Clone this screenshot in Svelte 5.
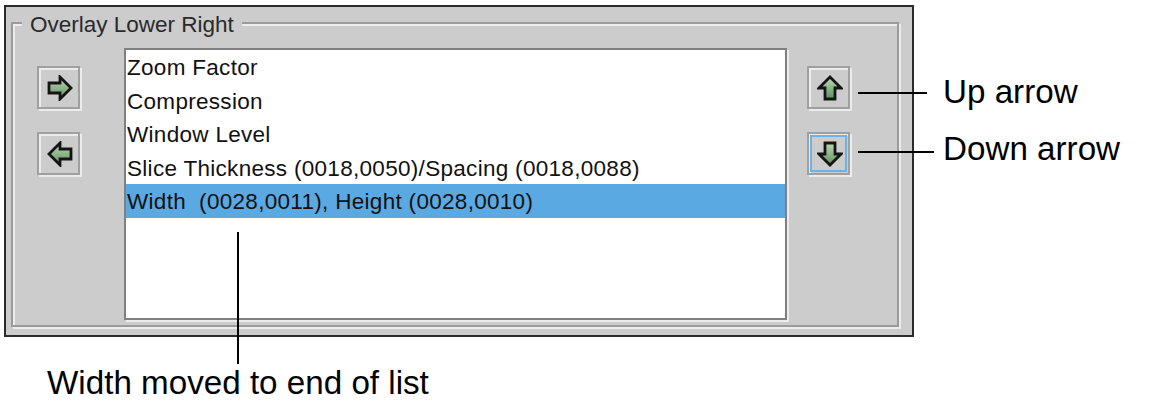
<script>
  const items = [
    'Zoom Factor',
    'Compression',
    'Window Level',
    'Slice Thickness (0018,0050)/Spacing (0018,0088)',
    'Width  (0028,0011), Height (0028,0010)'
  ];
  const selected = 4;

  const arrows = {
    right: '2,8 13,8 13,2 24,13 13,24 13,18 2,18',
    left: '24,8 13,8 13,2 2,13 13,24 13,18 24,18',
    up: '8,24 8,13 2,13 13,2 24,13 18,13 18,24',
    down: '8,2 8,13 2,13 13,24 24,13 18,13 18,2'
  };
</script>

{#snippet arrowButton(dir, focused)}
  <button class="arrow-btn" class:focused type="button">
    <svg width="26" height="26" viewBox="0 0 26 26">
      <polygon points={arrows[dir]} fill="url(#arrowFill)" stroke="#141414" stroke-width="2.8" />
    </svg>
  </button>
{/snippet}

<svg class="defs" width="0" height="0">
  <defs>
    <linearGradient id="arrowFill" x1="0" y1="0" x2="0" y2="1">
      <stop offset="0" stop-color="#bcd8b4" />
      <stop offset="1" stop-color="#5f9060" />
    </linearGradient>
  </defs>
</svg>

<div class="figure">
  <div class="panel">
    <div class="frame">
      <span class="legend">Overlay Lower Right</span>
      <div class="buttons left">
        {@render arrowButton('right', false)}
        {@render arrowButton('left', false)}
      </div>
      <ul class="list">
        {#each items as item, i}
          <li class:selected={i === selected}>{item}</li>
        {/each}
      </ul>
      <div class="buttons right">
        {@render arrowButton('up', false)}
        {@render arrowButton('down', true)}
      </div>
    </div>
  </div>

  <!-- callouts drawn over the screenshot -->
  <div class="callout up"><i></i><span>Up arrow</span></div>
  <div class="callout down"><i></i><span>Down arrow</span></div>
  <div class="leader"></div>
  <div class="caption">Width moved to end of list</div>
</div>

<style>
  :global(body) {
    background: #fff;
  }

  .defs {
    position: absolute;
  }

  .figure {
    position: relative;
    height: 417px;
    padding: 5px 0 0 4px;
    box-sizing: border-box;
    overflow: hidden;
    font-family: "Liberation Sans", Arial, sans-serif;
    color: #000;
  }

  .panel {
    width: 910px;
    height: 332px;
    box-sizing: border-box;
    padding: 15px 0 0 5px;
    background: #cccccc;
    border: 2px solid #2b2b2b;
  }

  .frame {
    position: relative;
    display: flex;
    align-items: flex-start;
    width: 888px;
    height: 305px;
    box-sizing: border-box;
    padding-top: 24px;
    border: 2px solid #9b9b9b;
    box-shadow: inset 2px 2px 0 #ececec, 2px 2px 0 #ececec;
  }

  .legend {
    position: absolute;
    left: 9px;
    top: -13px;
    padding: 0 8px;
    background: #cccccc;
    font-size: 22.5px;
    line-height: 28px;
    color: #2a2a2a;
  }

  .buttons {
    display: flex;
    flex-direction: column;
    gap: 23px;
    padding-top: 18px;
  }

  .buttons.left {
    margin: 0 44px 0 24px;
  }

  .buttons.right {
    margin-left: 20px;
  }

  .arrow-btn {
    display: flex;
    align-items: center;
    justify-content: center;
    width: 43px;
    height: 43px;
    padding: 0 0 0 2px;
    box-sizing: border-box;
    background: #cccccc;
    border: 2px solid #a0a0a0;
    box-shadow: inset 2px 2px 0 #ececec, 2px 2px 0 #ececec;
  }

  .arrow-btn.focused {
    outline: 2px solid #6fb2e6;
    outline-offset: -5px;
  }

  .list {
    width: 663px;
    height: 272px;
    margin: 0;
    padding: 0;
    box-sizing: border-box;
    list-style: none;
    background: #fff;
    border: 2px solid #808080;
    box-shadow: 2px 2px 0 #ececec;
    font-size: 22.5px;
    letter-spacing: 0.3px;
    color: #111;
  }

  .list li {
    height: 33.5px;
    box-sizing: border-box;
    padding: 1px 0 0 1px;
    line-height: 33.5px;
    white-space: pre;
  }

  .list li.selected {
    background: #5aa9e2;
  }

  .callout {
    position: absolute;
    left: 858px;
    display: flex;
    align-items: center;
    font-size: 33.2px;
    line-height: 36px;
  }

  .callout i {
    display: block;
    height: 2px;
    background: #000;
  }

  .callout.up {
    top: 74px;
  }

  .callout.up i {
    width: 69px;
    margin: 2px 16px 0 0;
  }

  .callout.down {
    top: 131px;
  }

  .callout.down i {
    width: 76px;
    margin: 6px 9px 0 0;
  }

  .leader {
    position: absolute;
    left: 237px;
    top: 232px;
    width: 2px;
    height: 132px;
    background: #000;
  }

  .caption {
    position: absolute;
    left: 47px;
    top: 365px;
    font-size: 33.2px;
    line-height: 36px;
  }
</style>
